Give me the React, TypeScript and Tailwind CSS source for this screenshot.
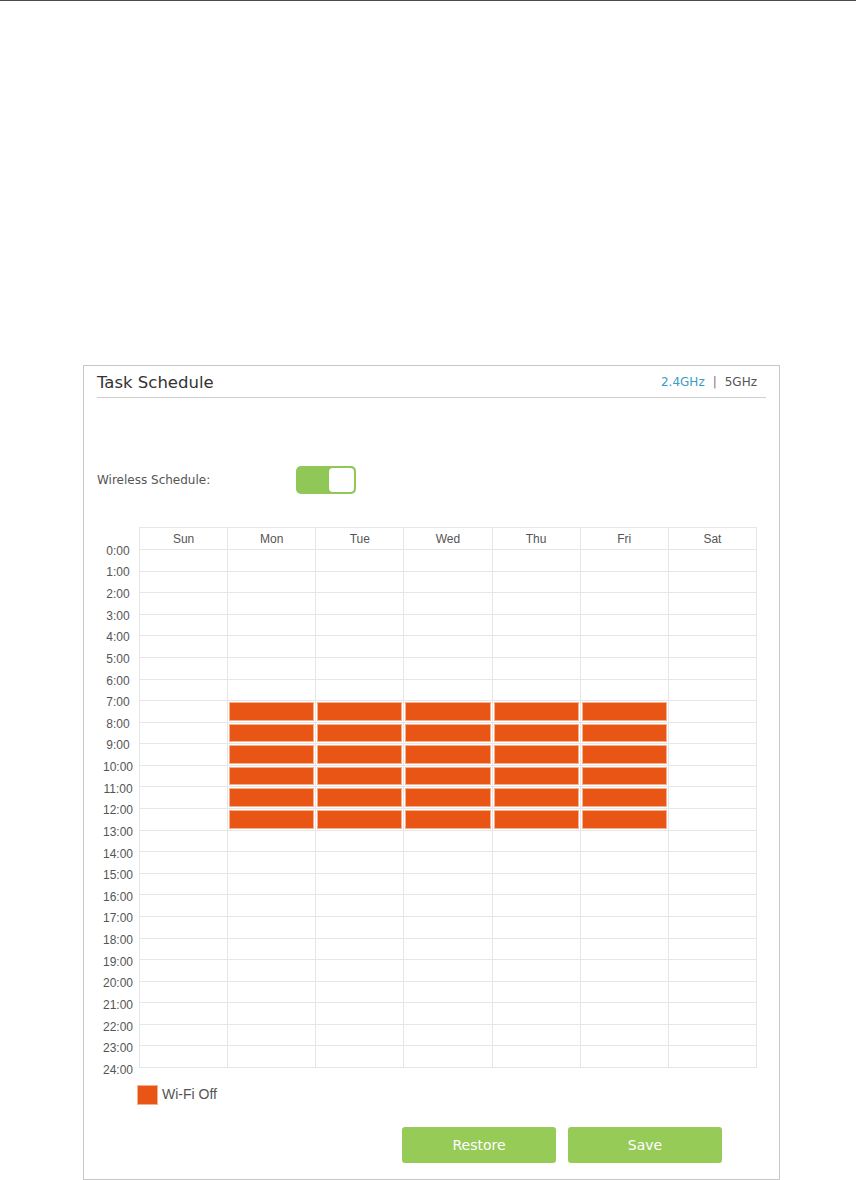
import React from "react";

const days = ["Sun", "Mon", "Tue", "Wed", "Thu", "Fri", "Sat"];
const hours = Array.from({ length: 25 }, (_, i) => `${i}:00`);

// Wi-Fi off: Mon..Fri, 7:00 - 13:00
const isOff = (day: number, hour: number) => day >= 1 && day <= 5 && hour >= 7 && hour < 13;

const Toggle = () => (
  <div className="flex h-[28px] w-[60px] rounded-[5px] bg-[#8fc857] p-[2px]">
    <div className="ml-auto h-full w-[25px] rounded-[4px] bg-white" />
  </div>
);

const ScheduleGrid = () => (
  <div className="flex h-[541px] items-start">
    <div className="flex w-[42px] shrink-0 flex-col pt-[13px] font-['Liberation_Sans',Arial,sans-serif] text-[12px] text-[#555]">
      {hours.map((h) => (
        <div key={h} className="flex h-[21.625px] items-center justify-center">
          {h}
        </div>
      ))}
    </div>
    <div className="grid h-[541px] w-[618px] grid-cols-7 grid-rows-[22px_repeat(24,minmax(0,1fr))] border-t border-l border-[#e6e6e6] font-['Liberation_Sans',Arial,sans-serif] text-[12px] text-[#555]">
      {days.map((d) => (
        <div key={d} className="flex items-center justify-center border-r border-b border-[#e6e6e6]">
          {d}
        </div>
      ))}
      {Array.from({ length: 24 }).map((_, hour) =>
        days.map((d, day) => (
          <div key={`${hour}-${d}`} className="border-r border-b border-[#e6e6e6] p-px">
            {isOff(day, hour) && <div className="h-full w-full border border-[#f4b08c] bg-[#e95514]" />}
          </div>
        ))
      )}
    </div>
  </div>
);

export default function App() {
  return (
    <div className="h-[1180px] w-[856px] overflow-hidden bg-white">
      <div className="h-px bg-[#4a4a4a]" />
      <div className="ml-[83px] mt-[364px] w-[697px] border border-[#c8c8c8] px-[13px] pb-[16px]">
        <div className="flex items-end justify-between border-b border-[#cfcfcf] pt-[4px]">
          <h1 className="pb-[2px] font-['DejaVu_Sans',Verdana,sans-serif] text-[16.5px] leading-[25px] text-[#333]">
            Task Schedule
          </h1>
          <div className="flex items-center pb-[7px] pr-[9px] font-['DejaVu_Sans',Verdana,sans-serif] text-[12px] leading-[16px]">
            <span className="text-[#3a9dc6]">2.4GHz</span>
            <span className="mx-[8px] text-[#8a6a8e]">|</span>
            <span className="text-[#555]">5GHz</span>
          </div>
        </div>

        <div className="mt-[68px] flex items-center">
          <span className="w-[199px] font-['DejaVu_Sans',Verdana,sans-serif] text-[12px] text-[#555]">
            Wireless Schedule:
          </span>
          <Toggle />
        </div>

        <div className="mt-[33px]">
          <ScheduleGrid />
        </div>

        <div className="ml-[40px] mt-[16px] flex items-center gap-[4px]">
          <div className="h-[20px] w-[21px] border border-[#f4b08c] bg-[#e95514]" />
          <span className="font-['Liberation_Sans',Arial,sans-serif] text-[14px] text-[#555]">Wi-Fi Off</span>
        </div>

        <div className="mt-[22px] flex justify-end gap-[12px] pr-[44px]">
          <button className="h-[36px] w-[154px] rounded-[3px] bg-[#96cb58] font-['DejaVu_Sans',Verdana,sans-serif] text-[14px] text-white">
            Restore
          </button>
          <button className="h-[36px] w-[154px] rounded-[3px] bg-[#96cb58] font-['DejaVu_Sans',Verdana,sans-serif] text-[14px] text-white">
            Save
          </button>
        </div>
      </div>
    </div>
  );
}
